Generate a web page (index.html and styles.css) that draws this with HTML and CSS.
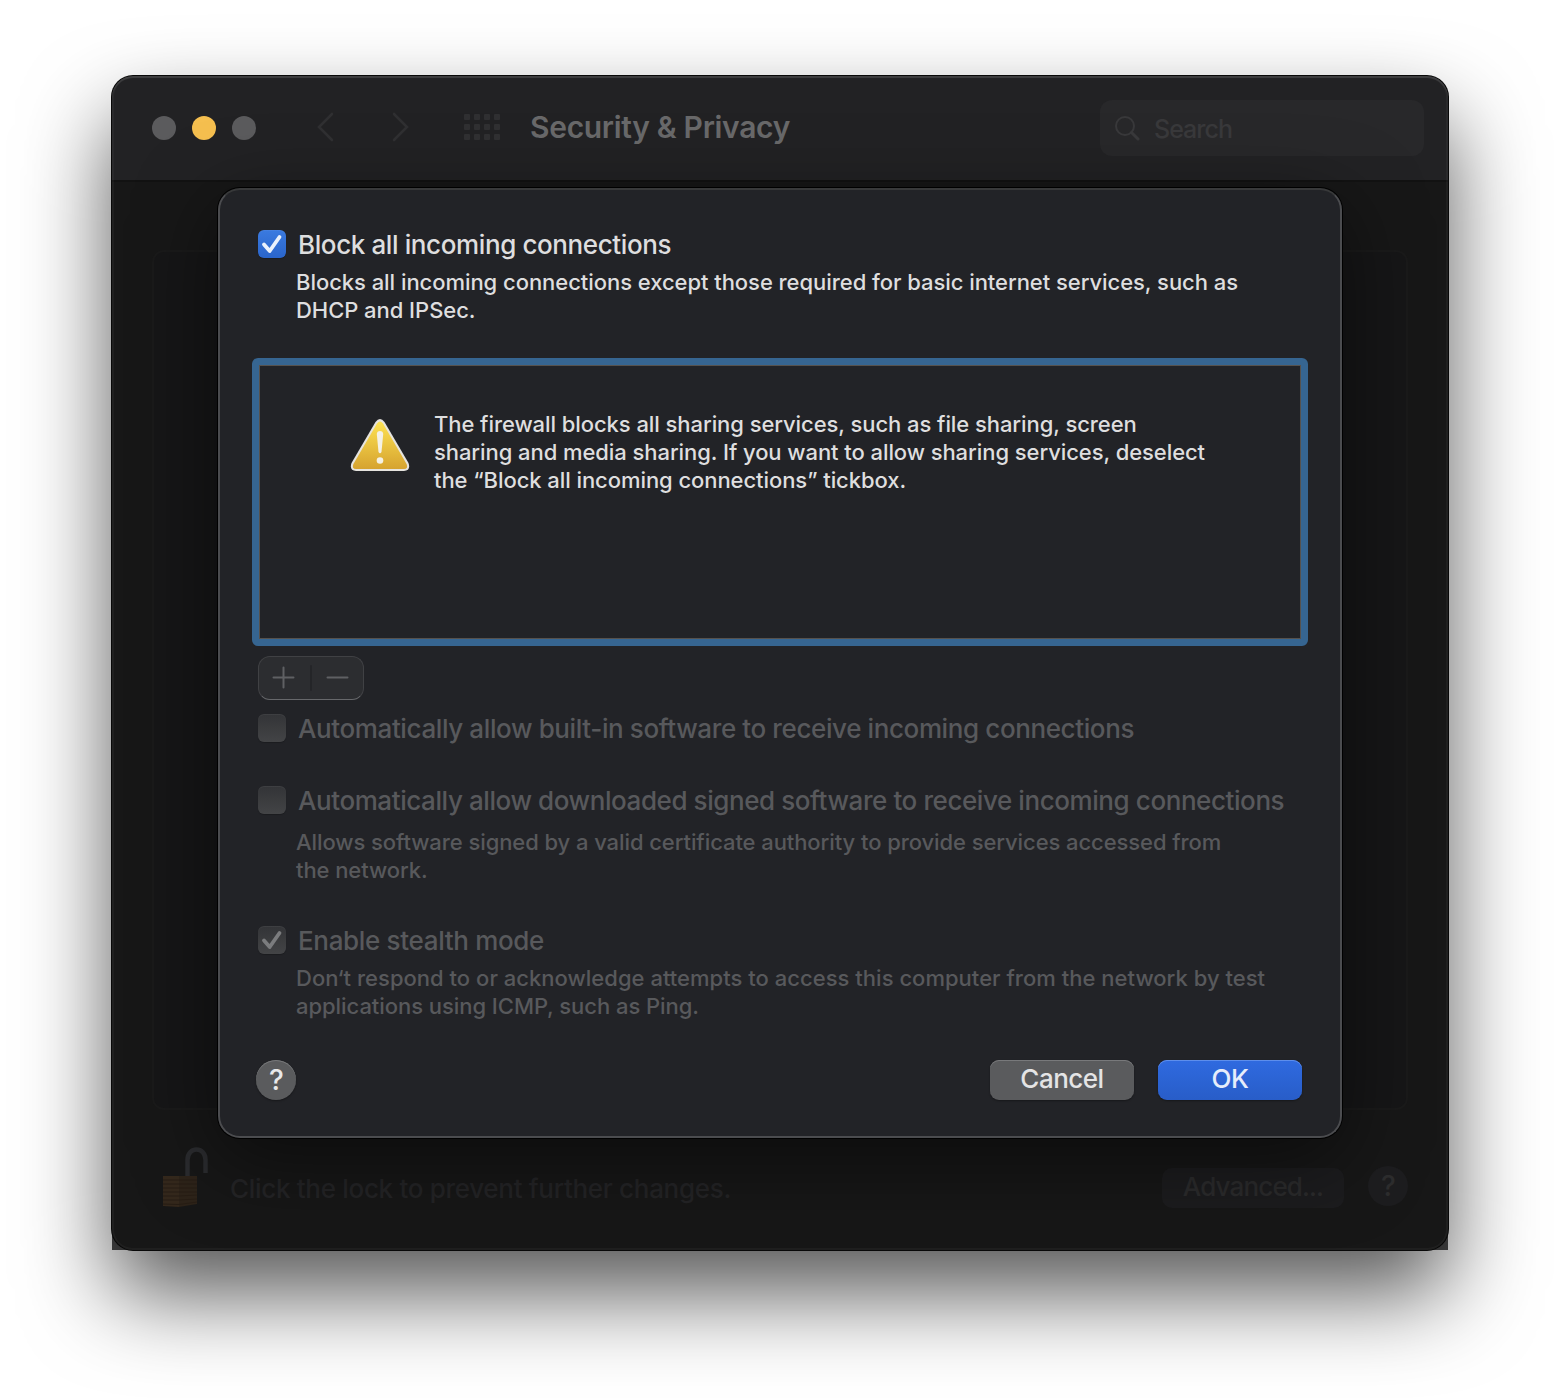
FILE: index.html
```html
<!DOCTYPE html>
<html lang="en">
<head>
<meta charset="utf-8">
<title>Security &amp; Privacy</title>
<link rel="stylesheet" href="styles.css">
</head>
<body>
<main class="window">
  <header class="toolbar">
    <div class="lights"><i></i><i class="minimise"></i><i></i></div>
    <svg class="back" width="20" height="32" viewBox="0 0 20 32"><path d="M17 3 4 16l13 13"/></svg>
    <svg class="forward" width="20" height="32" viewBox="0 0 20 32"><path d="M3 3l13 13L3 29"/></svg>
    <div class="grid"><i></i><i></i><i></i><i></i><i></i><i></i><i></i><i></i><i></i><i></i><i></i><i></i></div>
    <h1>Security &amp; Privacy</h1>
    <div class="search">
      <svg width="26" height="26" viewBox="0 0 26 26"><circle cx="11" cy="11" r="9"/><path d="M17.5 17.5 24 24" class="handle"/></svg>
      <span>Search</span>
    </div>
  </header>
  <section class="pane"></section>
  <footer class="bottom">
    <svg class="lock" width="48" height="62" viewBox="0 0 48 62">
      <path d="M25.500 30V14C25.500 0 43.500 0 43.500 14V27" fill="none" stroke="#2a2b2e" stroke-width="4.500"/>
      <path d="M1 30H17V61L1 60Z" fill="#34281c"/><path d="M17 30H35V58L17 61Z" fill="#2d2319"/>
      <path d="M1 34H17L35 34M1 38H17L35 38M1 42H17L35 42M1 46H17L35 46M1 50H17L35 49M1 54H17L35 53M1 58 17 58.500 35 56" fill="none" stroke="#271d14" stroke-width="1"/>
    </svg>
    <span class="hint">Click the lock to prevent further changes.</span>
    <button class="advanced">Advanced...</button>
    <button class="help dim">?</button>
  </footer>

  <section class="sheet">
    <label class="option"><span class="box on"><svg width="28" height="28" viewBox="0 0 28 28"><path d="M6 14.500 11.700 21 21.500 7"/></svg></span><span class="label">Block all incoming connections</span></label>
    <p class="note">Blocks all incoming connections except those required for basic internet services, such as<br>DHCP and IPSec.</p>
    <div class="list">
      <svg class="warning" width="60" height="56" viewBox="0 0 60 56">
        <defs><linearGradient id="amber" x1="0" y1="0" x2="0" y2="1"><stop offset="0" stop-color="#fde253"/><stop offset="1" stop-color="#d6a32f"/></linearGradient></defs>
        <path d="M25.500 4Q30 -2 34.500 4L58.500 45Q61 52.500 54 53H6Q-1 52.500 1.500 45Z" fill="#e6e4df"/>
        <path d="M27 5.500Q30 1.500 33 5.500L56.600 46Q58.500 51 54 51H6Q1.500 51 3.400 46Z" fill="url(#amber)"/>
        <path d="M26.800 16Q27 13 30 13T33.200 16L31.500 34Q30 36.500 28.500 34Z" fill="#f4f1e6"/><circle cx="30" cy="42.500" r="3.300" fill="#f4f1e6"/>
      </svg>
      <p>The firewall blocks all sharing services, such as file sharing, screen<br>sharing and media sharing. If you want to allow sharing services, deselect<br>the “Block all incoming connections” tickbox.</p>
    </div>
    <div class="segments">
      <svg width="104" height="42" viewBox="0 0 104 42"><path d="M14.500 20.500H34.500M24.500 10.500V30.500M68.500 20.500H88.500"/><path d="M52 9V33" class="divider"/></svg>
    </div>
    <label class="option off builtin"><span class="box"></span><span class="label">Automatically allow built-in software to receive incoming connections</span></label>
    <label class="option off signed"><span class="box"></span><span class="label">Automatically allow downloaded signed software to receive incoming connections</span></label>
    <p class="note off wide">Allows software signed by a valid certificate authority to provide services accessed from<br>the network.</p>
    <label class="option off stealth"><span class="box"><svg width="28" height="28" viewBox="0 0 28 28"><path d="M6 14.500 11.700 21 21.500 7"/></svg></span><span class="label">Enable stealth mode</span></label>
    <p class="note off"><span class="loose">Don‘t respond to or acknowledge attempts to access this computer from the network by test</span><br>applications using ICMP, such as Ping.</p>
    <div class="actions">
      <button class="help">?</button>
      <button class="push">Cancel</button>
      <button class="push primary">OK</button>
    </div>
  </section>
</main>
</body>
</html>
```
FILE: styles.css
```css
* { box-sizing: border-box; }
body { margin: 0; min-height: 1398px; padding: 76px 112px 0; background: #fff; font-family: Inter, "Liberation Sans", sans-serif; font-size: 26px; font-weight: 450; overflow: hidden; }
h1, p { margin: 0; }
button { padding: 0; border: 0; font: inherit; }
span, p { white-space: nowrap; }

.window { position: relative; width: 1336px; height: 1174px; border-radius: 21px; background: #171717; display: flex; flex-direction: column;
  box-shadow: 0 0 0 1px #080808, 0 44px 88px rgba(0, 0, 0, .66); }
.window::before { content: ""; position: absolute; z-index: -1; left: 0; right: 0; bottom: 0; height: 24px; background: #4c4c4d; }
.window::after { content: ""; position: absolute; inset: 0; border-radius: 21px; box-shadow: inset 0 0 0 2px rgba(255, 255, 255, .035), inset 0 2px 1px rgba(255, 255, 255, .1); pointer-events: none; }

.toolbar { flex: none; height: 106px; border-bottom: 2px solid #121212; border-radius: 21px 21px 0 0; background: #222224; display: flex; align-items: center; padding: 0 24px 0 40px; }
.lights { display: flex; gap: 16px; margin-right: 60px; }
.lights i { width: 24px; height: 24px; border-radius: 50%; background: #5b5b5d; }
.lights .minimise { background: #f5bf4f; }
.back, .forward { fill: none; stroke: #303032; stroke-width: 2.6; stroke-linecap: round; margin-top: -2px; }
.back { margin-left: -1px; }
.forward { margin-left: 56px; }
.grid { display: grid; grid-template-columns: repeat(4, 6px); gap: 4px; margin-left: 53px; margin-top: -2px; }
.grid i { width: 6px; height: 6px; border-radius: 1px; background: #303032; }
.toolbar h1 { margin: -2px 0 0 30px; font-size: 30px; font-weight: 600; letter-spacing: -.31px; color: #69696a; }
.search { margin-left: auto; width: 324px; height: 56px; border-radius: 12px; background: #28282a; display: flex; align-items: center; padding-left: 14px; gap: 14px; color: #39393b; }
.search span { padding-top: 2px; font-size: 25px; letter-spacing: -1px; }
.search svg { fill: none; stroke: #39393b; stroke-width: 2; }
.handle { stroke-width: 3; stroke-linecap: round; }

.pane { margin: 68px 40px 0; height: 860px; border: 2px solid #1a1a1a; border-radius: 12px; background: #161617; }
.bottom { display: flex; align-items: flex-start; padding: 36px 40px 0 50px; color: #242426; }
.hint { margin: 27px 0 0 20px; line-height: 32px; letter-spacing: -.31px; }
.advanced { margin: 22px 24px 0 auto; padding-bottom: 3px; width: 182px; height: 40px; border-radius: 10px; background: #1c1c1e; color: #2b2b2c; letter-spacing: -.85px; }
.help { width: 40px; height: 40px; padding-left: 1px; border-radius: 50%; background: #5a5b5d; color: #e9e9ea; font-size: 28px; font-weight: 500; box-shadow: inset 0 1px #77787a, 0 1px 2px rgba(0, 0, 0, .35); }
.help.dim { margin-top: 20px; background: #1d1d1f; color: #2d2d2e; box-shadow: none; }

.sheet { position: absolute; z-index: 1; left: 106px; top: 112px; width: 1124px; height: 950px; padding: 40px 36px 0 38px; border: 2px solid #4b4c4f; border-top-color: #38393a; border-radius: 22px; background: #222327; color: #dededf;
  box-shadow: 0 0 0 1px #000, 0 20px 80px rgba(0, 0, 0, .5); }
.option { display: flex; align-items: center; gap: 12px; height: 28px; letter-spacing: -.39px; }
.label { padding-top: 2px; line-height: 30px; }
.box { flex: none; width: 28px; height: 28px; border-radius: 6px; background: linear-gradient(#333437, #434446); box-shadow: 0 1px 1px rgba(0, 0, 0, .2), inset 0 1px rgba(255, 255, 255, .05); }
.box.on { background: linear-gradient(#3a7ae0, #2a65cb); }
.box svg { display: block; fill: none; stroke: #7b7c7e; stroke-width: 3.8; stroke-linecap: round; stroke-linejoin: round; }
.box.on svg { stroke: #eaf1fc; }
.off { color: #58595c; }
.note { margin: 10px 0 0 38px; font-size: 22px; line-height: 28px; letter-spacing: -.05px; }
.wide { margin-top: 14px; letter-spacing: -.08px; }
.loose { letter-spacing: .02px; }
.list { width: 1056px; height: 288px; margin: 34px 0 0 -6px; border: 7px solid #366591; border-radius: 6px; box-shadow: inset 0 0 0 1px #56524e; display: flex; padding: 45px 0 0 91px; font-size: 22px; line-height: 28px; letter-spacing: -.07px; }
.list p { margin-left: 24px; }
.warning { margin-top: 8px; }
.segments { width: 106px; height: 44px; margin-top: 10px; border: 1px solid #404144; border-bottom-color: #67686b; border-radius: 12px; background: #2c2d30; }
.segments svg { display: block; fill: none; stroke: #5f6063; stroke-width: 2; stroke-linecap: round; }
.segments .divider { stroke: #242528; }
.builtin { margin-top: 14px; }
.signed { margin-top: 44px; letter-spacing: -.42px; }
.stealth { margin-top: 42px; letter-spacing: -.33px; }
.actions { display: flex; margin: 40px 0 0 -2px; }
.push { width: 144px; height: 40px; padding-bottom: 3px; border-radius: 9px; background: #5a5b5d; color: #e4e4e5; letter-spacing: -.5px; margin-left: 24px; box-shadow: inset 0 1px #78797b, 0 1px 2px rgba(0, 0, 0, .35); }
.help + .push { margin-left: 694px; }
.primary { background: linear-gradient(#2f6ae0, #285dc8); color: #e6edfb; box-shadow: inset 0 1px #5d8eec, 0 1px 2px rgba(0, 0, 0, .35); }
```
